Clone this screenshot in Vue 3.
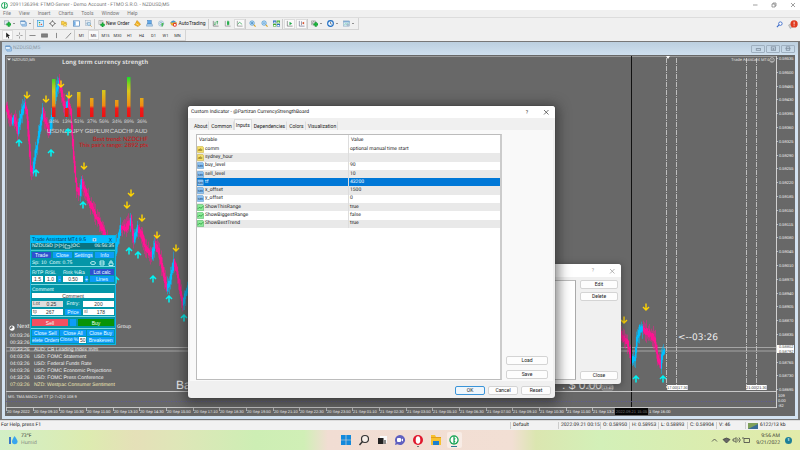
<script setup>
import { ref } from 'vue'

const menus = ['File', 'View', 'Insert', 'Charts', 'Tools', 'Window', 'Help']
const frames = ['M1', 'M5', 'M15', 'M30', 'H1', 'H4', 'D1', 'W1', 'MN']
const tools = [
  { icon: 'newchart', label: 'New chart', drop: true },
  { icon: 'profiles', label: 'Profiles', drop: true, end: true },
  { icon: 'market', label: 'Market watch' },
  { icon: 'target', label: 'Data window' },
  { icon: 'folder', label: 'Navigator' },
  { icon: 'panel', label: 'Terminal' },
  { icon: 'tester', label: 'Strategy tester', end: true },
  { icon: 'order', label: 'New Order', text: 'New Order' },
  { icon: 'diamond', label: 'MetaEditor' },
  { icon: 'print', label: 'Options' },
  { icon: 'signal', label: 'Signals' },
  { icon: 'auto', label: 'AutoTrading', text: 'AutoTrading', end: true },
  { icon: 'bars', label: 'Bar chart' },
  { icon: 'candles', label: 'Candlesticks' },
  { icon: 'line', label: 'Line chart', on: true, end: true },
  { icon: 'zoomin', label: 'Zoom in' },
  { icon: 'zoomout', label: 'Zoom out' },
  { icon: 'tile', label: 'Tile windows', end: true },
  { icon: 'scroll', label: 'Auto scroll', on: true },
  { icon: 'shift', label: 'Chart shift', on: true, end: true },
  { icon: 'indic', label: 'Indicators', drop: true },
  { icon: 'clock', label: 'Periods', drop: true },
  { icon: 'template', label: 'Templates', drop: true },
]
const drawTools = ['cursor', 'cross', 'hline', 'fibo', 'vline', 'diag']

const inputs = [
  ['ab', 'comm', 'optional manual time start'],
  ['ab', 'sydney_hour', ''],
  ['num', 'buy_level', '90'],
  ['num', 'sell_level', '10'],
  ['num', 'tf', '43200'],
  ['num', 'x_offset', '1500'],
  ['num', 'y_offset', '0'],
  ['bool', 'ShowThisRange', 'true'],
  ['bool', 'ShowBiggestRange', 'false'],
  ['bool', 'ShowBestTrend', 'true'],
]
const selected = ref(4)
const tabs = ['About', 'Common', 'Inputs', 'Dependencies', 'Colors', 'Visualization']
const tab = ref('Inputs')

const strength = [
  ['USD', 84, 79], ['NZD', 13, 108], ['JPY', 51, 92], ['GBP', 37, 98],
  ['EUR', 56, 90], ['CAD', 34, 100], ['CHF', 89, 77], ['AUD', 36, 98],
].map(([name, pct, top], i) => ({ name, pct, top, x: 54 + Math.round(i * 12.5) }))

const news = [
  ['00:03:26', ''], ['00:33:26', ''],
  ['00:33:26', 'AUD: CB Leading Index m/m'],
  ['04:03:26', 'USD: FOMC Statement'],
  ['04:03:26', 'USD: Federal Funds Rate'],
  ['04:03:26', 'USD: FOMC Economic Projections'],
  ['04:33:26', 'USD: FOMC Press Conference'],
  ['07:03:26', 'NZD: Westpac Consumer Sentiment'],
]

const prices = Array.from({ length: 25 }, (_, i) => ({
  text: (0.59535 - i * 0.00035).toFixed(5),
  y: 58 + i * 13.8,
})).filter((p, i) => i !== 21)

const times = Array.from({ length: 24 }, (_, i) => {
  if (i === 0) return '20 Sep 2022'
  const m = 550 + (i - 1) * 80
  const d = 20 + Math.floor(m / 1440)
  const p = n => String(n).padStart(2, '0')
  return `${d} Sep ${p(Math.floor((m % 1440) / 60))}:${p(m % 60)}`
}).map((text, i) => ({ text, x: 6 + i * 26.65 })).filter(t => t.x < 590)

const P = '#ff1493'
const B = '#00bfff'
const paths = [
  [[6, 106], [9, 116, P], [12, 121, P], [14, 118, B], [18, 131, P], [21, 116, B], [25, 104, B], [27, 112, P], [29, 138, P], [31, 170, P], [33, 172, P], [36, 152, B], [39, 135, B], [43, 111, B], [45, 120, P], [50, 132, P], [53, 112, B], [56, 94, B], [59, 82, B], [61, 88, P], [64, 105, P], [66, 108, P], [68, 102, B], [71, 112, P], [74, 158, P], [77, 190, P], [80, 192, P], [82, 182, B], [86, 193, P], [92, 207, P], [98, 220, P], [104, 232, P], [108, 245, P]],
  [[114, 262], [117, 245, B], [121, 228, B], [126, 228, P], [130, 222, P], [131, 219, B], [134, 240, P], [138, 228, B], [142, 235, P], [146, 249, P], [152, 256, P], [155, 245, B], [159, 252, P], [163, 270, P], [167, 288, P], [170, 282, B], [174, 262, B], [177, 270, P], [181, 294, P], [183, 304, P], [186, 294, B], [191, 280, B]],
  [[620, 330], [622, 336, P], [628, 344, P], [632, 360, P], [635, 359, B], [637, 340, B], [640, 329, B], [643, 329, B], [650, 334, P], [655, 340, P], [658, 358, P], [661, 366, P], [662, 356, B], [665, 350, B]],
]
let seed = 11
const rnd = () => (seed = (seed * 16807) % 2147483647) / 2147483647
const candles = []
for (const path of paths) {
  for (let i = 1; i < path.length; i++) {
    const [x0, y0] = path[i - 1]
    const [x1, y1, c] = path[i]
    const n = Math.max(1, Math.round(x1 - x0))
    for (let k = 0; k < n; k++) {
      const ya = y0 + ((y1 - y0) * k) / n
      const yb = y0 + ((y1 - y0) * (k + 1)) / n
      const top = Math.min(ya, yb) - 1 - rnd() * 3
      const bot = Math.max(ya, yb) + 1 + rnd() * 3
      candles.push({ x: x0 + k + 0.5, top, bot, hi: top - rnd() * 8, lo: bot + rnd() * 8, c })
    }
  }
}
const downs = [[27, 95], [46, 99], [61, 84], [69, 95], [84, 166], [131, 193], [127, 205], [142, 218], [157, 235], [176, 248], [624, 320], [646, 307]]
const ups = [[19, 143], [36, 173], [51, 153], [68, 132], [83, 205], [116, 280], [129, 251], [138, 255], [153, 279], [169, 299], [184, 318], [636, 379], [663, 379]]
const sessions = [667, 677, 747, 757]
const status = ['O: 0.58950', 'H: 0.58953', 'L: 0.58893', 'C: 0.58904', 'V: 46']
</script>

<template>
  <div class="screen">
    <svg class="defs" aria-hidden="true">
      <defs>
        <symbol id="newchart" viewBox="0 0 16 16"><rect x="1" y="2" width="10" height="8" fill="#dfe9f2" stroke="#789" /><path d="M9 5v3H6v4h3v3h4v-3h3V8h-3V5z" fill="#18b83a" stroke="#0a7a22" stroke-width=".8" /></symbol>
        <symbol id="profiles" viewBox="0 0 16 16"><rect x="4" y="5" width="11" height="9" rx="1" fill="#a9cdf0" stroke="#4a84bd" /><rect x="1" y="2" width="11" height="8" rx="1" fill="#e4f1fc" stroke="#4a84bd" /><path d="M1 3h11" stroke="#4a84bd" stroke-width="2" /></symbol>
        <symbol id="market" viewBox="0 0 16 16"><rect x="1" y="1" width="14" height="14" fill="#d9efff" stroke="#3b9bdc" stroke-width="1.5" /><path d="M4 4l4 1-3 3z" fill="#1aa83a" /><path d="M12 12l-4-1 3-3z" fill="#e0482a" /><circle cx="6" cy="11" r="1.5" fill="#eba000" /></symbol>
        <symbol id="target" viewBox="0 0 16 16"><path d="M8 0v16M0 8h16" stroke="#555" stroke-width="1.4" /><circle cx="8" cy="8" r="4.5" fill="#f6f6f6" stroke="#555" stroke-width="1.6" /></symbol>
        <symbol id="folder" viewBox="0 0 16 16"><path d="M1 3h5l1 2h5v6H1z" fill="#ffd34a" stroke="#b98a10" /><path d="M9 6l1.500 3 3.500.3-2.600 2.200.8 3.500-3.200-1.900L6 15l.7-3.500L4 9.300l3.500-.3z" fill="#ffe26a" stroke="#b98a10" stroke-width=".8" /></symbol>
        <symbol id="panel" viewBox="0 0 16 16"><rect x="1" y="2" width="14" height="12" fill="#fff" stroke="#3e78b4" stroke-width="1.5" /><path d="M2 3h4v10H2z" fill="#75afe6" /></symbol>
        <symbol id="tester" viewBox="0 0 16 16"><rect x="1" y="1" width="11" height="12" fill="#e7edf3" stroke="#93a5b6" /><path d="M3 10V6M6 10V4M9 10V6" stroke="#6f8da9" /><circle cx="9" cy="9" r="3.500" fill="#cfe8f8" stroke="#4c8ab8" /><path d="M12 12l3 3" stroke="#d09020" stroke-width="2" /></symbol>
        <symbol id="order" viewBox="0 0 16 16"><path d="M2 1h9v9H2z" fill="#fafafa" stroke="#777" /><path d="M4 3h5M4 5h5M4 7h3" stroke="#999" /><path d="M9 6v3H6v4h3v3h3v-3h3V9h-3V6z" fill="#18b83a" stroke="#0a7a22" stroke-width=".8" /></symbol>
        <symbol id="diamond" viewBox="0 0 16 16"><path d="M7 1l4 4 4 5-6 5-8-4 3-4z" fill="#f5b21e" stroke="#b27510" /><path d="M4 8l7 4" stroke="#fff2b0" stroke-width="1.5" /></symbol>
        <symbol id="print" viewBox="0 0 16 16"><rect x="4" y="1" width="8" height="8" fill="#5fa8ea" stroke="#2e71b5" /><path d="M2 9h12l1 5H1z" fill="#b8d6f0" stroke="#5585b0" /></symbol>
        <symbol id="signal" viewBox="0 0 16 16"><circle cx="7" cy="8" r="6" fill="none" stroke="#8db4d2" stroke-width="1.500" /><circle cx="7" cy="8" r="3" fill="none" stroke="#5fa0cc" stroke-width="1.300" /><path d="M8 7h5l-2 8H8z" fill="#4bb85a" /></symbol>
        <symbol id="auto" viewBox="0 0 16 16"><path d="M1 6l7-4 7 4-3 6H4z" fill="#f4bd2c" stroke="#b37c12" /><path d="M2 6c1-5 9-6 11-1" fill="#3f94d8" /><circle cx="11" cy="11" r="4.500" fill="#e2301c" /><rect x="9" y="9" width="4" height="4" fill="#fff" /></symbol>
        <symbol id="bars" viewBox="0 0 16 16"><path d="M3 2v12h12" fill="none" stroke="#555" stroke-width="1.300" /><path d="M7 4v8M12 2v8M5 10h2M10 4h4" stroke="#14963a" stroke-width="1.500" /></symbol>
        <symbol id="candles" viewBox="0 0 16 16"><path d="M3 2v12h12" fill="none" stroke="#777" stroke-width="1.300" /><path d="M9 1v12" stroke="#0e7a2c" /><rect x="7" y="3" width="5" height="8" fill="#25ae4b" /></symbol>
        <symbol id="line" viewBox="0 0 16 16"><path d="M3 2v12h12" fill="none" stroke="#666" stroke-width="1.300" /><path d="M4 10l4-5 6 5" fill="none" stroke="#1ea044" stroke-width="1.500" /></symbol>
        <symbol id="zoomin" viewBox="0 0 16 16"><path d="M10 10l5 5" stroke="#d5a021" stroke-width="2.500" /><circle cx="7" cy="7" r="5" fill="#cfeaff" stroke="#2f85c9" stroke-width="1.500" /><path d="M4.500 7h5M7 4.500v5" stroke="#1566a8" stroke-width="1.500" /></symbol>
        <symbol id="zoomout" viewBox="0 0 16 16"><path d="M10 10l5 5" stroke="#d5a021" stroke-width="2.500" /><circle cx="7" cy="7" r="5" fill="#cfeaff" stroke="#2f85c9" stroke-width="1.500" /><path d="M4.500 7h5" stroke="#1566a8" stroke-width="1.500" /></symbol>
        <symbol id="tile" viewBox="0 0 16 16"><path d="M0 1h7.500v6.500H0zM8.500 8.500H16V15H8.500z" fill="#2f6fc0" /><path d="M8.500 1H16v6.500H8.500zM0 8.500h7.500V15H0z" fill="#46ad2c" /><path d="M1.500 4h4.500v2H1.500zM10 4h4.500v2H10zM1.500 11.500h4.500v2H1.500zM10 11.500h4.500v2H10z" fill="#fff" /></symbol>
        <symbol id="scroll" viewBox="0 0 16 16"><path d="M3 2v12h12" fill="none" stroke="#555" stroke-width="1.300" /><path d="M8 4l6 4-6 4z" fill="#20a848" /></symbol>
        <symbol id="shift" viewBox="0 0 16 16"><path d="M3 2v12h12M8 3v9" fill="none" stroke="#557" stroke-width="1.300" /><path d="M9 7l5-3v6z" fill="#d6502c" /></symbol>
        <symbol id="indic" viewBox="0 0 16 16"><path d="M1 2h9v9H1z" fill="#e6e6e6" stroke="#777" /><path d="M3 9c2-7 3-6 5-4" fill="none" stroke="#555" /><path d="M9 5v3H6v4h3v3h4v-3h3V8h-3V5z" fill="#18b83a" stroke="#0a7a22" stroke-width=".8" /></symbol>
        <symbol id="clock" viewBox="0 0 16 16"><circle cx="8" cy="8" r="6.500" fill="#e8f4ff" stroke="#1e6cc0" stroke-width="2.500" /><path d="M8 4v4l3 2" fill="none" stroke="#333" stroke-width="1.300" /></symbol>
        <symbol id="template" viewBox="0 0 16 16"><rect x="1" y="2" width="14" height="12" fill="#d8e7f3" stroke="#7398b8" /><path d="M1 4h14" stroke="#5c93c5" stroke-width="2" /><path d="M3 12l3-4 3 2 4-4" fill="none" stroke="#3c8" /><circle cx="11" cy="11" r="3" fill="#a8bccc" /></symbol>
        <symbol id="cursor" viewBox="0 0 16 16"><path d="M5 1v12l3-3 2 5 2-1-2-5h4z" fill="#222" /></symbol>
        <symbol id="cross" viewBox="0 0 16 16"><path d="M8 1v5M8 10v5M1 8h5M10 8h5" stroke="#666" stroke-width="1.300" /></symbol>
        <symbol id="hline" viewBox="0 0 16 16"><path d="M1 8h14" stroke="#555" stroke-width="1.500" /></symbol>
        <symbol id="fibo" viewBox="0 0 16 16"><path d="M1 4h14v8H1z" fill="#999" stroke="#555" /><path d="M1 6.500h14M1 9.500h14" stroke="#444" /></symbol>
        <symbol id="vline" viewBox="0 0 16 16"><path d="M8 2v12" stroke="#555" stroke-width="1.500" /></symbol>
        <symbol id="diag" viewBox="0 0 16 16"><path d="M2 15L14 2" stroke="#555" stroke-width="1.500" /></symbol>
        <symbol id="ftmo" viewBox="0 0 16 16"><circle cx="8" cy="8" r="7.500" fill="#17a455" /><path d="M7 2.500C1 4 1 12 7 13.500zM9 2.500v2.500l2 1-2 1.500V9l1.500 1L9 11.500v2C15 12 15 4 9 2.500z" fill="#fff" /></symbol>
        <symbol id="ab" viewBox="0 0 16 16"><path d="M1 1h12l2 2v12H1z" fill="#f5df6a" stroke="#b79d20" /><text x="2" y="12" font-size="9" fill="#5c4a00">ab</text></symbol>
        <symbol id="num" viewBox="0 0 16 16"><path d="M1 1h12l2 2v12H1z" fill="#8dc3f2" stroke="#4584bb" /><text x="1" y="11" font-size="7" font-weight="bold" fill="#123f6b">123</text></symbol>
        <symbol id="bool" viewBox="0 0 16 16"><path d="M1 1h12l2 2v12H1z" fill="#8bea97" stroke="#35a548" /><path d="M2 11l4-4 3 3 5-5" fill="none" stroke="#0c7c24" stroke-width="1.500" /></symbol>
        <symbol id="down" viewBox="0 0 16 16"><path d="M8 1v13M2 8l6 6 6-6" fill="none" stroke="#ffd400" stroke-width="2.800" /></symbol>
        <symbol id="up" viewBox="0 0 16 16"><path d="M8 15V2M2 8l6-6 6 6" fill="none" stroke="#00f4f4" stroke-width="3" /></symbol>
      </defs>
    </svg>

    <header class="titlebar">
      <svg class="ico"><use href="#ftmo" /></svg>
      <span>2091136394: FTMO-Server - Demo Account - FTMO S.R.O. - NZDUSD,M5</span>
      <div class="winbtns">
        <button aria-label="Minimize"><svg viewBox="0 0 8 8"><path d="M2 4h4.500" /></svg></button>
        <button aria-label="Restore"><svg viewBox="0 0 8 8"><path d="M2 3h3v3H2zM3 3V2h3v3H5" /></svg></button>
        <button aria-label="Close"><svg viewBox="0 0 8 8"><path d="M2 2l4 4M6 2L2 6" /></svg></button>
      </div>
    </header>
    <nav class="menubar">
      <button v-for="m in menus" :key="m">{{ m }}</button>
    </nav>

    <div class="toolbar">
      <div class="strip">
        <button v-for="t in tools" :key="t.icon" :aria-label="t.label" :class="{ on: t.on, end: t.end }">
          <svg class="ico"><use :href="'#' + t.icon" /></svg>
          <span v-if="t.text">{{ t.text }}</span>
          <i v-if="t.drop" class="caret"></i>
        </button>
      </div>
      <div class="alerts">
        <button aria-label="Search"><svg class="ico" viewBox="0 0 16 16"><circle cx="10" cy="6" r="4" fill="#fff" stroke="#3768c8" stroke-width="2" /><path d="M7 9l-5 5" stroke="#3768c8" stroke-width="2.500" /></svg></button>
        <button aria-label="Alerts"><svg class="ico big" viewBox="0 0 18 16"><path d="M1 9l8-4v7l-5 3z" fill="#ccc" stroke="#999" /><circle cx="11" cy="7" r="6.500" fill="#e03a1f" /><path d="M11 3v5M11 9.500v1.500" stroke="#fff" stroke-width="1.500" /></svg></button>
      </div>
    </div>
    <div class="toolbar second">
      <div class="strip">
        <button v-for="(d, i) in drawTools" :key="d" :aria-label="d" :class="{ on: i === 0, end: i === 1 || i === 5 }">
          <svg class="ico"><use :href="'#' + d" /></svg>
        </button>
        <button v-for="f in frames" :key="f" class="tf" :class="{ on: f === 'M5' }">{{ f }}</button>
      </div>
    </div>

    <main class="mdi">
      <div class="charttitle">
        <svg class="ico"><use href="#profiles" /></svg>
        <span>NZDUSD,M5</span>
        <div class="boxbtns">
          <button aria-label="Minimize chart"><svg viewBox="0 0 12 7"><rect x="4" y="3" width="5" height="2" /></svg></button>
          <button aria-label="Restore chart"><svg viewBox="0 0 12 7"><rect x="4" y="1" width="5" height="4" /><rect x="6" y="3" width="1" height="1" /></svg></button>
          <button aria-label="Close chart"><svg viewBox="0 0 12 7"><rect x="4" y="1" width="4" height="4" /><path d="M3 3h6" /></svg></button>
        </div>
      </div>

      <div class="chart">
        <svg class="plot" viewBox="5 55 790 361" preserveAspectRatio="xMinYMin slice">
          <defs>
            <linearGradient id="heat" gradientUnits="userSpaceOnUse" x1="0" y1="77" x2="0" y2="117">
              <stop offset="0" stop-color="#16e02a" /><stop offset=".18" stop-color="#8fd01c" /><stop offset=".35" stop-color="#d8c81c" />
              <stop offset=".72" stop-color="#f28a12" /><stop offset=".78" stop-color="#ee1c1c" /><stop offset="1" stop-color="#f01010" />
            </linearGradient>
          </defs>
          <path d="M6 56.500H776" stroke="#9a9a9a" />
          <path d="M6.500 56V407" stroke="#8a8a8a" />
          <path d="M6 347.500H776M6 351H776" stroke="#a4a4a4" />
          <g class="sess"><path v-for="s in sessions" :key="s" :d="`M${s - .5} 58V388`" /></g>
          <g>
            <template v-for="(c, i) in candles" :key="i">
              <path :d="`M${c.x} ${c.hi}V${c.lo}`" :stroke="c.c" stroke-width=".5" />
              <path :d="`M${c.x} ${c.top}V${c.bot}`" :stroke="c.c" stroke-width="1.200" />
            </template>
          </g>
          <rect v-for="s in strength" :key="s.name" :x="s.x - 2" :y="s.top" width="3.500" :height="117 - s.top" fill="url(#heat)" />
          <g class="lab mid">
            <template v-for="s in strength" :key="s.name">
              <text class="pct" :x="s.x" y="123">{{ s.pct }}%</text>
              <text :x="s.x - 1" y="133">{{ s.name }}</text>
            </template>
          </g>
          <text class="head" x="62" y="64">Long term currency strength</text>
          <g class="warn"><text x="148" y="141">Best trend: NZDCHF</text><text x="148" y="147">This pair's range: 2892 pts</text></g>
          <path d="M7 58.500h4l-2 2z" fill="#fff" />
          <text class="tiny" x="12" y="61">NZDUSD,M5</text>
          <text class="tiny" x="769" y="61" text-anchor="end">Trade Assistant MT4</text>
          <circle cx="772" cy="60" r="2.300" fill="none" stroke="#ddd" stroke-width=".7" />
          <path d="M771 59.500h.5M772.500 59.500h.5M771 61q1 1 2 0" stroke="#ddd" stroke-width=".6" fill="none" />
          <use v-for="([x, y], i) in downs" :key="'d' + i" href="#down" :x="x - 4" :y="y - 4" width="8" height="8" />
          <use v-for="([x, y], i) in ups" :key="'u' + i" href="#up" :x="x - 4" :y="y - 4" width="8" height="8" />
          <path d="M631.500 56V407" stroke="#111" />
          <path d="M666 56h4l-2 3z" fill="#fff" />
          <text class="count" x="678" y="340">&lt;--03:26</text>
          <text class="bal" x="176" y="389">Balance</text>
          <text class="bal" x="562" y="389">: $ 0.00</text>
          <g class="pill">
            <rect class="ghost" x="588" y="385" width="12" height="4" rx="1" />
            <rect class="ghost" x="602" y="385" width="11" height="5" rx="1" /><text class="lt" x="603" y="389">13:40</text>
            <rect x="667" y="385" width="21" height="5" rx="1" /><text x="667" y="389">17:00|17:30</text>
            <rect x="746" y="385" width="21" height="5" rx="1" /><text x="746" y="389">21:00|21:30</text>
          </g>
          <path d="M6 391.500H776M6 407.500H776" stroke="#c8c8c8" />
          <path d="M6 401.500H776" stroke="#5a55a8" stroke-width=".8" stroke-dasharray="1 1.500" />
          <text class="macd" x="8" y="398">MS: TMA MACO v8 TT [2-7»2] 0 108 9</text>
          <path d="M776.500 56V408" stroke="#d0d0d0" />
          <g class="axis">
            <template v-for="p in prices" :key="p.text">
              <path :d="`M776 ${Math.round(p.y) + .5}h2`" stroke="#ddd" stroke-width=".7" />
              <text :x="779" :y="Math.round(p.y) + 2">{{ p.text }}</text>
            </template>
            <text x="778" y="397">109</text><text x="778" y="402">0.00</text><text x="778" y="407">-82</text>
            <rect x="777" y="345" width="17" height="8" fill="#fff" />
            <text x="779" y="348" class="dark">0.58802</text><text x="779" y="353" class="dark">0.58792</text>
            <template v-for="t in times" :key="t.text">
              <path :d="`M${Math.round(t.x) + .5} 408v3`" stroke="#ddd" stroke-width=".7" />
              <text :x="Math.round(t.x) + 1" y="413">{{ t.text }}</text>
            </template>
            <path d="M592.500 408v3" stroke="#ddd" stroke-width=".7" />
            <text x="593" y="413">21 Sep 13:2</text>
            <text x="649" y="413">1 Sep 16:00</text>
            <rect x="615" y="408" width="33" height="7" fill="#050505" />
            <text x="616" y="413" class="dim">2022.09.21 15:05</text>
          </g>
        </svg>

        <section class="news">
          <h2><svg class="ico" viewBox="0 0 16 16"><circle cx="8" cy="8" r="7" fill="#fff" /><path d="M8 1l2 6-6 4-2-3z" fill="#666" /></svg><span>Next</span><small>Group</small></h2>
          <ul>
            <li v-for="([t, n], i) in news" :key="i" :class="{ late: i === 7 }"><time>{{ t }}</time><span>{{ n }}</span></li>
          </ul>
        </section>

        <section class="trade">
          <div class="tt"><b>Trade Assistant MT4 9.5</b><svg viewBox="0 0 8 8"><path d="M1 2h6v5H1z" fill="#cde" /><circle cx="4" cy="4.500" r="1.300" fill="#28a" /></svg><button aria-label="Close panel">X</button></div>
          <div class="sym"><span>NZDUSD |&gt;|&gt;|</span><svg viewBox="0 0 8 6"><path d="M1 1h2l1 1h3v3H1z" /></svg><span>|OC</span><span class="clk">06:56:35</span></div>
          <div class="row four"><button class="act">Trade</button><button>Close</button><button>Settings</button><button>Info</button></div>
          <div class="row info"><span>Sp: 10&nbsp; Com: 0.75</span>
            <svg viewBox="0 0 24 6"><ellipse cx="3" cy="3" rx="2.500" ry="1.500" /><path d="M10 1h4v4h-4zM10 3h4M19 3h4v2.500h-4zM20 3V1h2v2" /></svg>
          </div>
          <div class="row risk">
            <label>R/TP<input value="1.5" /></label>
            <label>R/SL<input value="1.0" /></label>
            <button>-</button>
            <label class="wide">Risk %Ba<input value="0.50" /></label>
            <button>+</button>
            <div class="stack"><button class="act">Lot calc</button><button>Lines</button></div>
          </div>
          <div class="row cmt"><label>Comment<input value="Comment" /></label></div>
          <div class="row three"><label class="in off"><span>Lot</span><input value="0.25" /></label><span class="c">Entry:</span><input aria-label="Entry" value="200" /></div>
          <div class="row three"><label class="in"><span>tp</span><input value="267" /></label><button>Price</button><label class="in"><span>sl</span><input value="178" /></label></div>
          <div class="row deal"><button class="sell">Sell</button><button aria-label="Pending"></button><button class="buy">Buy</button></div>
          <div class="row three last"><button>Close Sell</button><button>Close All</button><button>Close Buy</button></div>
          <div class="row three"><button>elete Orders</button><label class="pc">Close %<input value="50" /></label><button>Breakeven</button></div>
        </section>
      </div>
    </main>

    <footer class="status">
      <span class="help">For Help, press F1</span>
      <span class="prof">Default</span>
      <span class="date">2022.09.21 00:15</span>
      <span v-for="s in status" :key="s">{{ s }}</span>
      <span class="net"><svg viewBox="0 0 10 6"><path d="M0 0h10v6H0z" fill="#7fa05a" /><path d="M0 6l10-5v5z" fill="#3a6c96" /></svg>6122/13 kb</span>
    </footer>

    <div class="taskbar">
      <div class="weather">
        <svg viewBox="0 0 10 10"><path d="M1 2h2v7H1z" fill="#3a78c8" /><path d="M6.500 1q3 4 3 5.500a2.500 2.500 0 0 1-5.500 0Q4 5 6.500 1z" fill="#38a6ee" /></svg>
        <p>73°F<small>Humid</small></p>
      </div>
      <div class="apps">
        <button aria-label="Start"><svg viewBox="0 0 12 12"><path d="M1 1h4.700v4.700H1zM6.300 1H11v4.700H6.300zM1 6.300h4.700V11H1zM6.300 6.300H11V11H6.300z" fill="#1389dc" /></svg></button>
        <button aria-label="Search"><svg viewBox="0 0 12 12"><circle cx="7" cy="5" r="3.500" fill="#f6eee8" stroke="#333" stroke-width="1.200" /><path d="M4.500 7.500L1.500 11" stroke="#333" stroke-width="1.400" /></svg></button>
        <button aria-label="Task view"><svg viewBox="0 0 12 12"><path d="M4 2h7v7H4z" fill="#fafafa" /><path d="M2 4h6v2h2v4H2z" fill="#888" /><path d="M2 4h5v6H2z" fill="#222" /></svg></button>
        <button aria-label="Chat"><svg viewBox="0 0 12 12"><path d="M6 1a5 5 0 1 1-2.500 9.300L1 11l.6-2.600A5 5 0 0 1 6 1z" fill="#6060c0" /><rect x="3" y="4" width="4" height="4" rx="1" fill="#fff" /><path d="M7.500 5.500L9 4.500v3L7.500 6.500z" fill="#fff" /></svg></button>
        <button aria-label="Opera"><svg viewBox="0 0 12 14"><circle cx="6" cy="7" r="5" fill="#e0182d" /><ellipse cx="6" cy="7" rx="2.300" ry="3.800" fill="#fff" /><path d="M5 13.500h2" stroke="#777" /></svg></button>
        <button aria-label="Files"><svg viewBox="0 0 12 12"><path d="M1 1h4l1 2h5v8H1z" fill="#f8c130" /><path d="M3 7h6v4H3z" fill="#1c7fd0" /><path d="M1 3h10v1H1z" fill="#e29f1a" /></svg></button>
        <button aria-label="FTMO" class="cur"><svg viewBox="0 0 12 14"><use href="#ftmo" x="1" y="2" width="10" height="10" /><path d="M3 13.500h6" stroke="#2a7a92" /></svg></button>
      </div>
      <div class="tray">
        <svg viewBox="0 0 40 8"><path d="M1 5.500L3.500 3 6 5.500" /><path d="M12 3.500q3.500-3 7 0L15.500 7z" fill="#666" /><path d="M22 3h1.500L25 1.500v5L23.500 5H22zM26.500 2.500q1.500 1.500 0 3M28 1.500q2.500 2.500 0 5" /><path d="M33 2.500h5.500v4H33zM32 1v2" /></svg>
        <p>9:56 AM<span>9/21/2022</span></p>
        <b>1</b>
      </div>
    </div>

    <section class="dlg list">
      <div class="dt"><span></span><button aria-label="Help">?</button><button aria-label="Close window"><svg viewBox="0 0 8 8"><path d="M2 2l4.500 4.500M6.500 2L2 6.500" /></svg></button></div>
      <div class="lbody">
        <div class="lbox"></div>
        <div class="lbtns"><button>Edit</button><button>Delete</button><button class="low">Close</button></div>
      </div>
    </section>

    <section class="dlg main">
      <div class="dt"><span>Custom Indicator - @Partizan CurrencyStrengthBoard</span><button aria-label="Help dialog">?</button><button aria-label="Close dialog"><svg viewBox="0 0 8 8"><path d="M2 2l4.500 4.500M6.500 2L2 6.500" /></svg></button></div>
      <div class="tabs"><button v-for="t in tabs" :key="t" :class="{ sel: t === tab }" @click="tab = t">{{ t }}</button></div>
      <div class="page">
        <div class="grid">
          <table>
            <thead><tr><th>Variable</th><th>Value</th></tr></thead>
            <tbody>
              <tr v-for="([k, n, v], i) in inputs" :key="n" :class="{ sel: i === selected }" @click="selected = i">
                <td><svg class="ico"><use :href="'#' + k" /></svg>{{ n }}</td><td>{{ v }}</td>
              </tr>
            </tbody>
          </table>
        </div>
        <div class="side"><button>Load</button><button>Save</button></div>
      </div>
      <div class="foot"><button class="ok">OK</button><button>Cancel</button><button>Reset</button></div>
    </section>
  </div>
</template>

<style>
body { margin: 0; overflow: hidden; }
</style>
<style scoped>
* { box-sizing: border-box; margin: 0; }
.screen { position: relative; display: flex; flex-direction: column; height: 100vh; min-height: 450px; background: #f0f0f0; color: #222; font: 5px/7px Roboto, "Open Sans", sans-serif; text-rendering: geometricPrecision; overflow: hidden; }
.defs { position: absolute; width: 0; height: 0; }
button, input { font: inherit; color: inherit; border: 0; padding: 0; background: none; min-width: 0; border-radius: 0; }
svg { display: block; flex: none; }
.ico { width: 7px; height: 7px; }

.titlebar { display: flex; align-items: center; gap: 2px; height: 10px; padding: 0 3px 0 0; background: #fff; color: #777; }
.titlebar .ico { margin-left: 1px; }
.winbtns { display: flex; margin-left: auto; gap: 11px; }
.winbtns svg { width: 8px; height: 8px; fill: none; stroke: #777; stroke-width: .7; }
.menubar { display: flex; gap: 8px; height: 8px; padding: 0 3px; border-bottom: 1px solid #dcdcdc; color: #777; }
.menubar button { line-height: 7px; }

.toolbar { display: flex; justify-content: space-between; height: 12px; }
.toolbar.second { height: 11px; }
.strip { display: flex; align-items: center; gap: 1px; padding: 0 2px; border: 1px solid #d4d4d4; border-width: 0 1px 1px 0; }
.strip button { display: flex; align-items: center; gap: 1px; height: 10px; padding: 0 2px; color: #222; }
.strip .on { background: #fafafa; box-shadow: inset 0 0 0 1px #ddd; }
.strip .end { border-right: 1px solid #ccc; }
.strip .tf { width: 11px; padding: 0; justify-content: center; font-size: 4px; color: #333; }
.caret { border: 1px solid transparent; border-top-color: #333; border-bottom: 0; margin-left: 1px; }
.alerts { display: flex; align-items: center; gap: 5px; padding-right: 2px; }
.alerts .big { width: 10px; height: 9px; }

.mdi { flex: 1; min-height: 0; display: flex; flex-direction: column; padding: 0 3px 3px; background: #d3e2f1; border: solid #777; border-width: 1px 2px; }
.charttitle { display: flex; align-items: center; gap: 1px; height: 13px; margin: 0 -3px; padding: 0 3px; background: linear-gradient(#bccfdf, #cfe0ef); color: #8d9aa6; }
.boxbtns { display: flex; gap: 1px; margin-left: auto; }
.boxbtns button { border: 1px solid #9fb0c0; border-radius: 1px; }
.boxbtns svg { width: 12px; height: 6px; fill: none; stroke: #8494a4; stroke-width: 1; }
.chart { position: relative; flex: 1; min-height: 0; overflow: hidden; background: #686868; font-family: "Liberation Sans", Arial, sans-serif; }
.plot { width: 100%; height: 100%; }
.sess path { stroke: #bdbdbd; stroke-width: 1; stroke-dasharray: 5 1 1 1; }
.lab { font-size: 6px; fill: #d8d8d8; text-anchor: middle; }
.lab .pct { font-size: 5px; }
.head { font-size: 6px; font-weight: bold; fill: #ddd; font-family: "Open Sans", sans-serif; }
.warn { font-size: 6px; fill: #d01010; text-anchor: end; font-family: Lato, sans-serif; }
.tiny { font-size: 4px; fill: #eee; font-family: "Open Sans", sans-serif; }
.macd { font-size: 4px; fill: #eee; }
.count { font-size: 9px; fill: #eee; font-family: "DejaVu Sans", sans-serif; }
.bal { font-size: 12px; fill: #eee; }
.pill { font-size: 4px; }
.pill rect { fill: #fff; }
.pill .ghost { fill: none; stroke: #ccc; stroke-width: .6; }
.pill text { fill: #333; }
.pill .lt { fill: #eee; }
.axis { font-size: 4px; fill: #f2f2f2; }
.axis .dark { fill: #444; }
.axis .dim { fill: #777; }

.news { position: absolute; left: 4px; top: 268px; width: 122px; color: #f0f0f0; font-size: 5px; }
.news h2 { display: flex; align-items: center; gap: 2px; height: 9px; font: inherit; font-size: 6px; }
.news small { margin-left: auto; font-size: 5px; }
.news .ico { width: 6px; height: 6px; }
.news ul { list-style: none; padding: 1px 0 0 1px; }
.news li { display: flex; gap: 2px; line-height: 7px; white-space: nowrap; }
.news time { width: 22px; }
.news .late { color: #efe6b4; }

.trade { position: absolute; left: 25px; top: 180px; width: 86px; display: flex; flex-direction: column; background: #0496a8; border: 1px solid #10b4e4; color: #e8ffff; font-size: 5px; line-height: 6px; white-space: nowrap; }
.tt { display: flex; align-items: center; height: 7px; padding: 0 3px 0 1px; background: #00bfff; color: #035; }
.tt b { font-weight: normal; }
.tt svg { width: 5px; height: 5px; margin: 0 12px 0 auto; }
.sym { display: flex; align-items: center; height: 6px; margin-bottom: 1px; padding: 0 1px; background: #0a7380; }
.sym svg { width: 7px; height: 5px; fill: none; stroke: #dff; stroke-width: .8; }
.sym .clk { margin-left: auto; }
.row { display: flex; gap: 2px; padding: 1px 1px 0; }
.row button { background: #0c9cf8; text-align: center; height: 6px; line-height: 6px; }
.row .act { background: #2f51d0; }
.row input { width: 100%; height: 6px; background: #fff; color: #333; text-align: center; font-size: 5px; line-height: 6px; border-radius: 0; }
.four { border-top: 1px solid #4cc; }
.four button { flex: 1; }
.info { justify-content: space-between; align-items: center; height: 9px; border-bottom: 1px solid #7cdbe4; }
.info svg { width: 24px; height: 6px; fill: none; stroke: #dff; stroke-width: .8; }
.risk { align-items: flex-end; justify-content: space-between; height: 18px; padding-bottom: 2px; border-bottom: 1px solid #7cdbe4; }
.risk label { display: flex; flex-direction: column; width: 11px; }
.risk .wide { width: 20px; }
.risk > button { width: 3px; }
.stack { display: flex; flex-direction: column; gap: 1px; width: 24px; }
.cmt { padding-top: 2px; margin-bottom: 2px; }
.cmt label { flex: 1; }
.cmt input { display: block; height: 5px; }
.three { display: grid; grid-template-columns: 31px 1fr 31px; margin-bottom: 1px; }
.three.last { border-top: 1px solid #7cdbe4; grid-template-columns: 1fr 1fr 1fr; gap: 1px; }
.three.last + .three { grid-template-columns: 1fr 1fr 1fr; padding-top: 0; gap: 1px; }
.three button { overflow: hidden; }
.last button, .last + .three, .last + .three input { font-size: 5px; }
.in { display: flex; background: #fff; color: #555; height: 6px; padding-left: 1px; }
.off, .off input { background: #ddd; }
.c { text-align: center; }
.pc { display: flex; justify-content: space-between; background: #0c9cf8; }
.row .pc input { width: 7px; }
.deal { padding: 2px 1px; border-top: 1px solid #7cdbe4; }
.deal button { height: 7px; width: 6px; }
.deal .sell { flex: 1; background: #f25060; }
.deal .buy { flex: 1; background: #089408; }

.status { display: flex; height: 10px; align-items: center; border-top: 1px solid #dcdcdc; background: #f1f1f1; }
.status span { width: 29px; padding: 0 2px; border-right: 1px solid #ccc; white-space: nowrap; }
.status .help { flex: 1; padding-left: 1px; }
.status .prof { width: 48px; }
.status .date { width: 42px; }
.status .net { display: flex; gap: 2px; align-items: center; width: 54px; border: 0; }
.net svg { width: 10px; height: 6px; }

.taskbar { display: grid; grid-template-columns: 1fr auto 1fr; height: 20px; align-items: center; font-family: "Open Sans", sans-serif; background: linear-gradient(90deg, #d2efc6, #ddebb0 11%, #e5e0b8 17%, #dfe6b8 22%, #cdeeb4 32%, #d0efb6 38%, #f1ddd3 41%, #f2dfd4 64%, #dbe6b0 67%, #d3f0b8 75%, #dcecae 90%, #e2ebaa); }
.weather { display: flex; gap: 3px; padding-left: 8px; align-items: center; }
.weather svg { width: 10px; height: 10px; }
.weather p, .tray p { font-size: 5px; line-height: 7px; }
.weather small { display: block; font-size: 5px; color: #777; }
.tray span { display: block; }
.apps { display: flex; gap: 3px; }
.apps button { display: flex; align-items: center; justify-content: center; width: 15px; height: 16px; border-radius: 2px; }
.apps svg { width: 12px; height: 14px; }
.apps .cur { background: #f8ece6; }
.tray { display: flex; justify-content: flex-end; align-items: center; gap: 5px; padding-right: 8px; }
.tray svg { width: 40px; height: 8px; fill: none; stroke: #444; stroke-width: .8; }
.tray p { text-align: right; }
.tray b { width: 7px; height: 7px; border-radius: 50%; background: #1d7f97; color: #fff; text-align: center; font-size: 4px; }

.dlg { position: absolute; display: flex; flex-direction: column; background: #f0f0f0; border-radius: 3px; overflow: hidden; }
.dlg button { color: #222; }
.dt { display: flex; align-items: center; height: 12px; padding: 0 5px 0 3px; background: #fff; gap: 14px; }
.dt span { flex: 1; }
.dt svg { width: 8px; height: 8px; stroke: #333; stroke-width: .7; }
.list .dt button { opacity: .5; }
.list { left: 480px; top: 264px; width: 141px; height: 120px; box-shadow: 0 1px 6px 1px #3338; }
.list .dt { height: 13px; }
.lbody { flex: 1; display: flex; padding: 3px 3px 4px; gap: 4px; }
.lbox { flex: 1; background: #fff; border: 1px solid #bbb; border-right-color: #aaa; }
.lbtns { display: flex; flex-direction: column; gap: 3px; width: 38px; }
.lbtns button, .side button, .foot button { height: 9px; line-height: 7px; background: #fdfdfd; border: 1px solid #d4d4d4; border-radius: 2px; }
.lbtns .low { margin-top: auto; }
.main { left: 188px; top: 106px; width: 367px; height: 292px; box-shadow: 0 2px 12px 4px #2228, 0 0 1px #222; }
.tabs { display: flex; align-items: flex-end; height: 12px; padding: 0 4px; }
.tabs button { padding: 0 1px; height: 9px; line-height: 7px; border: 1px solid transparent; border-bottom: 0; border-right-color: #ddd; }
.tabs .sel { height: 11px; background: #f9f9f9; border-color: #ddd; }
.page { flex: 1; display: flex; gap: 4px; margin: 0 2px; padding: 4px 5px 1px 6px; background: #f9f9f9; }
.grid { flex: 1; background: #fff; border: 1px solid #bcbcbc; border-right: 2px solid #ccc; }
table { width: 100%; height: 93px; border-collapse: collapse; table-layout: fixed; line-height: 7px; }
th, td { padding: 0; text-align: left; font-weight: normal; white-space: nowrap; }
th { height: 10px; padding-left: 2px; }
td:first-child, th:first-child { width: 50%; border-right: 1px solid #ddd; }
td:nth-child(2) { padding-left: 1px; }
td .ico { display: inline-block; width: 7px; height: 7px; vertical-align: top; margin-right: 1px; }
tbody tr:nth-child(even) { background: #e9e9e9; }
tbody tr.sel:nth-child(odd) { background: #0078d7; color: #fff; }
.side { display: flex; flex-direction: column; justify-content: flex-end; gap: 5px; width: 42px; padding-bottom: 1px; }
.foot { display: flex; justify-content: flex-end; gap: 3px; padding: 5px 4px 3px; }
.foot button { width: 30px; }
.foot .ok { border-color: #3a94d8; background: #eef6fc; }
</style>
